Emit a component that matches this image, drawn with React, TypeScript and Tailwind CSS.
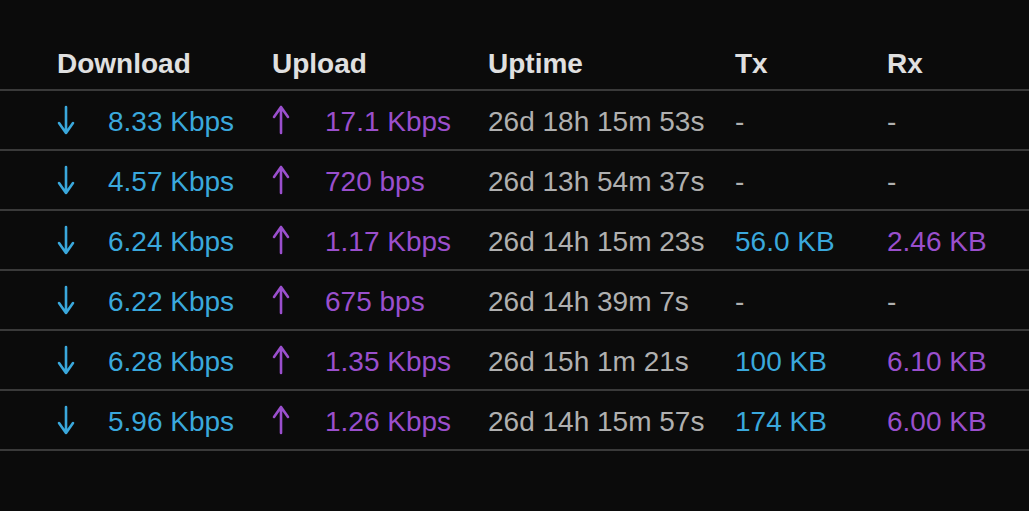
import React from "react";

type Row = {
  down: string;
  up: string;
  uptime: string;
  tx: string;
  rx: string;
};

const rows: Row[] = [
  { down: "8.33 Kbps", up: "17.1 Kbps", uptime: "26d 18h 15m 53s", tx: "-", rx: "-" },
  { down: "4.57 Kbps", up: "720 bps", uptime: "26d 13h 54m 37s", tx: "-", rx: "-" },
  { down: "6.24 Kbps", up: "1.17 Kbps", uptime: "26d 14h 15m 23s", tx: "56.0 KB", rx: "2.46 KB" },
  { down: "6.22 Kbps", up: "675 bps", uptime: "26d 14h 39m 7s", tx: "-", rx: "-" },
  { down: "6.28 Kbps", up: "1.35 Kbps", uptime: "26d 15h 1m 21s", tx: "100 KB", rx: "6.10 KB" },
  { down: "5.96 Kbps", up: "1.26 Kbps", uptime: "26d 14h 15m 57s", tx: "174 KB", rx: "6.00 KB" },
];

const cols = "grid grid-cols-[215px_216px_247px_152px_1fr] pl-[57px]";

const Arrow = (props: { up?: boolean; className: string }) => (
  <svg
    width="18"
    height="30"
    viewBox="0 0 18 30"
    fill="none"
    stroke="currentColor"
    strokeWidth="2.6"
    strokeLinecap="round"
    strokeLinejoin="round"
    className={props.className}
  >
    {props.up ? (
      <path d="M9 2V28M2 12L9 2L16 12" />
    ) : (
      <path d="M9 2V28M2 18L9 28L16 18" />
    )}
  </svg>
);

const Value = (props: { text: string; color: string }) =>
  props.text === "-" ? (
    <span className="text-[#b0b0b0]">-</span>
  ) : (
    <span className={props.color}>{props.text}</span>
  );

export default function App() {
  return (
    <div className="min-h-[511px] w-full bg-[#0b0b0b] font-['Liberation_Sans',Arial,sans-serif] text-[28px] leading-[32px]">
      <div className={`${cols} h-[91px] items-end border-b-2 border-[#3a3a3a] pb-[9px] font-bold text-[#e0e0e0]`}>
        <div>Download</div>
        <div>Upload</div>
        <div>Uptime</div>
        <div>Tx</div>
        <div>Rx</div>
      </div>
      {rows.map((row, i) => (
        <div
          key={i}
          className={`${cols} h-[60px] items-center border-b-2 border-[#3a3a3a] pt-[3px]`}
        >
          <div className="flex items-center">
            <Arrow className="-mt-[3px] text-[#3aa8dc]" />
            <span className="ml-[33px] text-[#3aa8dc]">{row.down}</span>
          </div>
          <div className="flex items-center">
            <Arrow up className="-mt-[3px] text-[#9a4fcd]" />
            <span className="ml-[35px] text-[#9a4fcd]">{row.up}</span>
          </div>
          <div className="text-[#b0b0b0]">{row.uptime}</div>
          <div>
            <Value text={row.tx} color="text-[#3aa8dc]" />
          </div>
          <div>
            <Value text={row.rx} color="text-[#9a4fcd]" />
          </div>
        </div>
      ))}
    </div>
  );
}
